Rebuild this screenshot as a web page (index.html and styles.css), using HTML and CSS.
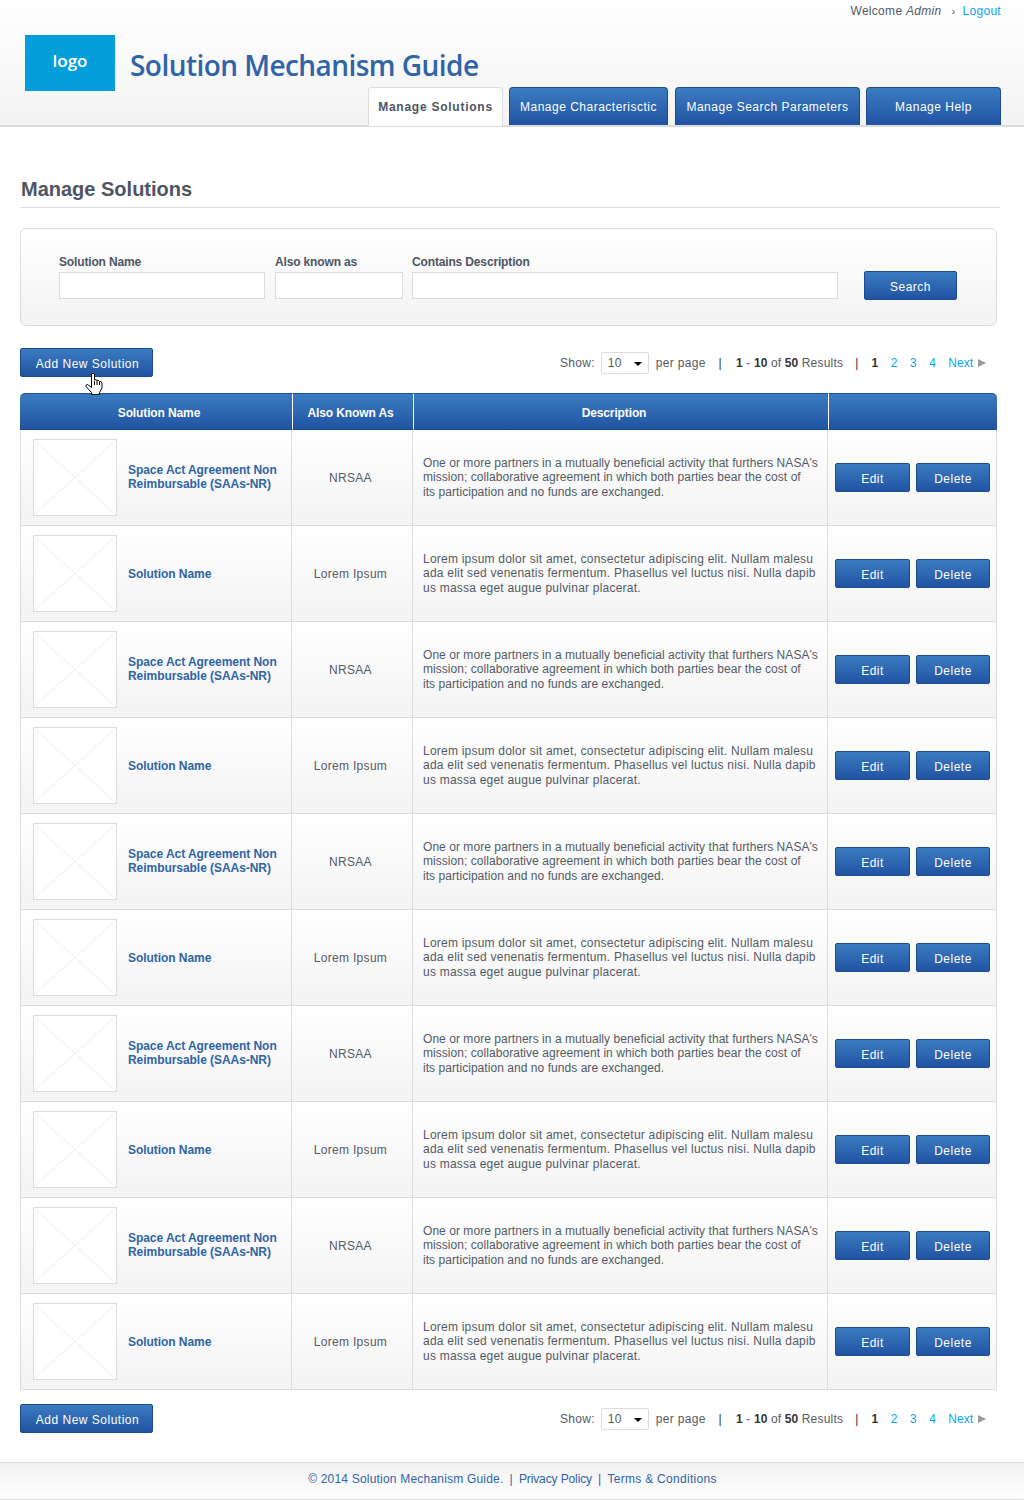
FILE: index.html
```html
<!DOCTYPE html>
<html lang="en">
<head>
    <meta charset="UTF-8">
    <title>Solution Mechanism Guide</title>
    <link rel="stylesheet" href="styles.css">
</head>
<body>
    <header class="header">
        <div class="user-bar">
            <span>Welcome <em>Admin</em></span>
            <span class="user-sep">&rsaquo;</span>
            <a href="#">Logout</a>
        </div>
        <div class="brand">
            <div class="logo">logo</div>
            <div class="site-title">Solution Mechanism Guide</div>
        </div>
        <nav class="tabs">
            <a class="tab tab-active" href="#">Manage Solutions</a>
            <a class="tab tab-chars" href="#">Manage Characterisctic</a>
            <a class="tab tab-params" href="#">Manage Search Parameters</a>
            <a class="tab tab-help" href="#">Manage Help</a>
        </nav>
    </header>

    <main class="content">
        <h1>Manage Solutions</h1>

        <form class="search-panel">
            <div class="field field-name">
                <label>Solution Name</label>
                <input type="text">
            </div>
            <div class="field field-aka">
                <label>Also known as</label>
                <input type="text">
            </div>
            <div class="field field-desc">
                <label>Contains Description</label>
                <input type="text">
            </div>
            <button type="button" class="btn btn-search">Search</button>
        </form>

        <div class="toolbar toolbar-top">
            <button type="button" class="btn btn-add">Add New Solution</button>
            <svg class="hand" width="18" height="23" viewBox="0 0 18 23">
                <path d="M6.5 2 Q8 .5 9.5 2 V8 Q11 7 12 8.5 Q13.5 7.5 14.5 9.5 Q16.5 9 17 11 V16 L14.5 20.5 V22.5 H6.5 V20.5 L1 14.5 Q.5 12.5 2.5 12.5 L6.5 15.5 Z" fill="#fff" stroke="#000" stroke-width="1"/>
                <path d="M9.5 9 V13 M12 9 V13 M14.5 10 V13" stroke="#000" stroke-width="1" fill="none"/>
            </svg>
            <div class="pager">
                <span>Show:</span>
                <span class="select-box">10<i class="select-arrow"></i></span>
                <span>per page</span>
                <span class="pipe">|</span>
                <span class="results"><b>1</b> - <b>10</b> of <b>50</b> Results</span>
                <span class="pipe pipe-last">|</span>
                <span class="pages"><b>1</b><a href="#">2</a><a href="#">3</a><a href="#">4</a><a href="#">Next</a><i class="next-arrow"></i></span>
            </div>
        </div>

        <table class="solutions">
            <colgroup>
                <col class="col-name"><col class="col-aka"><col class="col-desc"><col class="col-actions">
            </colgroup>
            <thead>
                <tr><th>Solution Name</th><th>Also Known As</th><th>Description</th><th></th></tr>
            </thead>
            <tbody>
                <tr>
                    <td><div class="name-cell"><svg class="thumb" viewBox="0 0 84 77" preserveAspectRatio="none"><path d="M0 0 L84 77 M84 0 L0 77"/></svg><a class="name-long" href="#">Space Act Agreement Non Reimbursable (SAAs-NR)</a></div></td>
                    <td class="aka">NRSAA</td>
                    <td class="desc desc-long">One or more partners in a mutually beneficial activity that furthers NASA's<br>mission; collaborative agreement in which both parties bear the cost of<br>its participation and no funds are exchanged.</td>
                    <td><div class="actions"><button type="button" class="btn btn-edit">Edit</button><button type="button" class="btn btn-delete">Delete</button></div></td>
                </tr>
                <tr>
                    <td><div class="name-cell"><svg class="thumb" viewBox="0 0 84 77" preserveAspectRatio="none"><path d="M0 0 L84 77 M84 0 L0 77"/></svg><a href="#">Solution Name</a></div></td>
                    <td class="aka">Lorem Ipsum</td>
                    <td class="desc">Lorem ipsum dolor sit amet, consectetur adipiscing elit. Nullam malesu ada elit sed venenatis fermentum. Phasellus vel luctus nisi. Nulla dapib us massa eget augue pulvinar placerat.</td>
                    <td><div class="actions"><button type="button" class="btn btn-edit">Edit</button><button type="button" class="btn btn-delete">Delete</button></div></td>
                </tr>
                <tr>
                    <td><div class="name-cell"><svg class="thumb" viewBox="0 0 84 77" preserveAspectRatio="none"><path d="M0 0 L84 77 M84 0 L0 77"/></svg><a class="name-long" href="#">Space Act Agreement Non Reimbursable (SAAs-NR)</a></div></td>
                    <td class="aka">NRSAA</td>
                    <td class="desc desc-long">One or more partners in a mutually beneficial activity that furthers NASA's<br>mission; collaborative agreement in which both parties bear the cost of<br>its participation and no funds are exchanged.</td>
                    <td><div class="actions"><button type="button" class="btn btn-edit">Edit</button><button type="button" class="btn btn-delete">Delete</button></div></td>
                </tr>
                <tr>
                    <td><div class="name-cell"><svg class="thumb" viewBox="0 0 84 77" preserveAspectRatio="none"><path d="M0 0 L84 77 M84 0 L0 77"/></svg><a href="#">Solution Name</a></div></td>
                    <td class="aka">Lorem Ipsum</td>
                    <td class="desc">Lorem ipsum dolor sit amet, consectetur adipiscing elit. Nullam malesu ada elit sed venenatis fermentum. Phasellus vel luctus nisi. Nulla dapib us massa eget augue pulvinar placerat.</td>
                    <td><div class="actions"><button type="button" class="btn btn-edit">Edit</button><button type="button" class="btn btn-delete">Delete</button></div></td>
                </tr>
                <tr>
                    <td><div class="name-cell"><svg class="thumb" viewBox="0 0 84 77" preserveAspectRatio="none"><path d="M0 0 L84 77 M84 0 L0 77"/></svg><a class="name-long" href="#">Space Act Agreement Non Reimbursable (SAAs-NR)</a></div></td>
                    <td class="aka">NRSAA</td>
                    <td class="desc desc-long">One or more partners in a mutually beneficial activity that furthers NASA's<br>mission; collaborative agreement in which both parties bear the cost of<br>its participation and no funds are exchanged.</td>
                    <td><div class="actions"><button type="button" class="btn btn-edit">Edit</button><button type="button" class="btn btn-delete">Delete</button></div></td>
                </tr>
                <tr>
                    <td><div class="name-cell"><svg class="thumb" viewBox="0 0 84 77" preserveAspectRatio="none"><path d="M0 0 L84 77 M84 0 L0 77"/></svg><a href="#">Solution Name</a></div></td>
                    <td class="aka">Lorem Ipsum</td>
                    <td class="desc">Lorem ipsum dolor sit amet, consectetur adipiscing elit. Nullam malesu ada elit sed venenatis fermentum. Phasellus vel luctus nisi. Nulla dapib us massa eget augue pulvinar placerat.</td>
                    <td><div class="actions"><button type="button" class="btn btn-edit">Edit</button><button type="button" class="btn btn-delete">Delete</button></div></td>
                </tr>
                <tr>
                    <td><div class="name-cell"><svg class="thumb" viewBox="0 0 84 77" preserveAspectRatio="none"><path d="M0 0 L84 77 M84 0 L0 77"/></svg><a class="name-long" href="#">Space Act Agreement Non Reimbursable (SAAs-NR)</a></div></td>
                    <td class="aka">NRSAA</td>
                    <td class="desc desc-long">One or more partners in a mutually beneficial activity that furthers NASA's<br>mission; collaborative agreement in which both parties bear the cost of<br>its participation and no funds are exchanged.</td>
                    <td><div class="actions"><button type="button" class="btn btn-edit">Edit</button><button type="button" class="btn btn-delete">Delete</button></div></td>
                </tr>
                <tr>
                    <td><div class="name-cell"><svg class="thumb" viewBox="0 0 84 77" preserveAspectRatio="none"><path d="M0 0 L84 77 M84 0 L0 77"/></svg><a href="#">Solution Name</a></div></td>
                    <td class="aka">Lorem Ipsum</td>
                    <td class="desc">Lorem ipsum dolor sit amet, consectetur adipiscing elit. Nullam malesu ada elit sed venenatis fermentum. Phasellus vel luctus nisi. Nulla dapib us massa eget augue pulvinar placerat.</td>
                    <td><div class="actions"><button type="button" class="btn btn-edit">Edit</button><button type="button" class="btn btn-delete">Delete</button></div></td>
                </tr>
                <tr>
                    <td><div class="name-cell"><svg class="thumb" viewBox="0 0 84 77" preserveAspectRatio="none"><path d="M0 0 L84 77 M84 0 L0 77"/></svg><a class="name-long" href="#">Space Act Agreement Non Reimbursable (SAAs-NR)</a></div></td>
                    <td class="aka">NRSAA</td>
                    <td class="desc desc-long">One or more partners in a mutually beneficial activity that furthers NASA's<br>mission; collaborative agreement in which both parties bear the cost of<br>its participation and no funds are exchanged.</td>
                    <td><div class="actions"><button type="button" class="btn btn-edit">Edit</button><button type="button" class="btn btn-delete">Delete</button></div></td>
                </tr>
                <tr>
                    <td><div class="name-cell"><svg class="thumb" viewBox="0 0 84 77" preserveAspectRatio="none"><path d="M0 0 L84 77 M84 0 L0 77"/></svg><a href="#">Solution Name</a></div></td>
                    <td class="aka">Lorem Ipsum</td>
                    <td class="desc">Lorem ipsum dolor sit amet, consectetur adipiscing elit. Nullam malesu ada elit sed venenatis fermentum. Phasellus vel luctus nisi. Nulla dapib us massa eget augue pulvinar placerat.</td>
                    <td><div class="actions"><button type="button" class="btn btn-edit">Edit</button><button type="button" class="btn btn-delete">Delete</button></div></td>
                </tr>
            </tbody>
        </table>

        <div class="toolbar toolbar-bottom">
            <button type="button" class="btn btn-add">Add New Solution</button>
            <div class="pager">
                <span>Show:</span>
                <span class="select-box">10<i class="select-arrow"></i></span>
                <span>per page</span>
                <span class="pipe">|</span>
                <span class="results"><b>1</b> - <b>10</b> of <b>50</b> Results</span>
                <span class="pipe pipe-last">|</span>
                <span class="pages"><b>1</b><a href="#">2</a><a href="#">3</a><a href="#">4</a><a href="#">Next</a><i class="next-arrow"></i></span>
            </div>
        </div>
    </main>

    <footer class="footer">
        <span class="foot-copy">&copy; 2014 Solution Mechanism Guide.</span>
        <span class="foot-sep">|</span>
        <a class="foot-privacy" href="#">Privacy Policy</a>
        <span class="foot-sep">|</span>
        <a href="#">Terms &amp; Conditions</a>
    </footer>
</body>
</html>
```

FILE: styles.css
```css
* {
    box-sizing: border-box;
}

body {
    margin: 0;
    background: #fff;
    font-family: "Liberation Sans", Arial, sans-serif;
    font-size: 12px;
    letter-spacing: 0.3px;
    color: #555a64;
}

a {
    color: #0ba5ec;
    text-decoration: none;
}

/* header */
.header {
    height: 127px;
    padding: 3px 23px 0 25px;
    background: linear-gradient(#fff, #f3f3f3);
    border-bottom: 2px solid #dcdcdc;
}

.user-bar {
    display: flex;
    justify-content: flex-end;
    align-items: center;
    height: 15px;
    color: #555a64;
}

.user-sep {
    margin: 0 7px 0 10px;
    font-size: 11px;
}

.brand {
    display: flex;
    align-items: flex-end;
    margin-top: 17px;
}

.logo {
    display: flex;
    align-items: center;
    justify-content: center;
    width: 90px;
    height: 56px;
    padding-bottom: 5px;
    background: #049fdb;
    color: #fff;
    font-family: "Open Sans", sans-serif;
    font-size: 17px;
    font-weight: 600;
    letter-spacing: 0;
}

.site-title {
    margin: 0 0 6px 15px;
    color: #2f64a8;
    font-family: "Open Sans", sans-serif;
    font-size: 28px;
    font-weight: 600;
    letter-spacing: -0.55px;
    line-height: 40px;
}

.tabs {
    display: flex;
    justify-content: flex-end;
    margin-top: -4px;
}

.tab {
    display: block;
    height: 38px;
    margin-left: 6px;
    padding-top: 12px;
    text-align: center;
    color: #fff;
    letter-spacing: 0.5px;
    background: linear-gradient(#3b7cc0, #2153a3);
    border: 1px solid #1c4a94;
    border-bottom: 0;
    border-radius: 4px 4px 0 0;
}

.tab-active {
    width: 135px;
    height: 39px;
    margin-left: 0;
    background: #fff;
    border-color: #dcdcdc;
    color: #4e5562;
    font-weight: bold;
    letter-spacing: 0.75px;
}

.tab-chars {
    width: 159px;
}

.tab-params {
    width: 185px;
    margin-left: 7px;
}

.tab-help {
    width: 135px;
}

/* page */
.content {
    padding: 0 24px 0 20px;
}

h1 {
    width: 980px;
    margin: 50px 0 20px;
    padding: 0 0 5px 1px;
    border-bottom: 1px solid #dcdcdc;
    color: #4e5562;
    font-size: 20px;
    line-height: 25px;
    letter-spacing: 0;
}

.search-panel {
    display: flex;
    align-items: flex-end;
    width: 977px;
    height: 98px;
    padding: 0 39px 26px 38px;
    background: linear-gradient(#fff, #f3f3f3);
    border: 1px solid #dcdcdc;
    border-radius: 6px;
}

.field label {
    display: block;
    margin-bottom: 3px;
    line-height: 14px;
    font-weight: bold;
    letter-spacing: -0.15px;
    color: #4e5562;
}

.field input {
    display: block;
    width: 100%;
    height: 27px;
    border: 1px solid #dcdcdc;
    background: #fff;
}

.field-name {
    width: 206px;
}

.field-aka {
    width: 128px;
    margin-left: 10px;
}

.field-desc {
    width: 426px;
    margin-left: 9px;
}

.btn {
    height: 29px;
    padding: 2px 0 0;
    background: linear-gradient(#3b7cc0, #2153a3);
    border: 1px solid #1c4a94;
    border-radius: 2px;
    color: #fff;
    font-family: inherit;
    font-size: 12px;
    letter-spacing: 0.5px;
}

.btn-search {
    width: 93px;
    margin: 0 0 0 26px;
    transform: translateY(1px);
}

.btn-add {
    width: 133px;
    padding-left: 2px;
}

.toolbar {
    display: flex;
    justify-content: space-between;
    align-items: center;
    position: relative;
}

.toolbar-top {
    margin-top: 22px;
}

.toolbar-bottom {
    margin-top: 14px;
}

.hand {
    position: absolute;
    left: 65px;
    top: 24px;
}

.pager {
    display: flex;
    align-items: center;
    margin-right: 14px;
    color: #555a64;
}

.select-box {
    position: relative;
    display: block;
    width: 48px;
    height: 22px;
    margin: 0 7px 0 6px;
    padding: 3px 0 0 6px;
    background: #fff;
    border: 1px solid #dcdcdc;
    border-radius: 2px;
}

.select-arrow {
    position: absolute;
    right: 6px;
    top: 9px;
    border-top: 4px solid #000;
    border-left: 4px solid transparent;
    border-right: 4px solid transparent;
}

.pipe {
    margin: 0 14px 0 13px;
    color: #333;
}

.pipe-last {
    margin: 0 13px 0 12px;
}

.results {
    letter-spacing: 0.2px;
}

.results b,
.pages b {
    color: #333;
    letter-spacing: 0;
}

.pages {
    display: flex;
    align-items: center;
    letter-spacing: 0;
}

.pages a {
    margin-left: 12.5px;
}

.next-arrow {
    margin-left: 5px;
    border-left: 8px solid #999;
    border-top: 4px solid transparent;
    border-bottom: 4px solid transparent;
}

/* table */
.solutions {
    width: 977px;
    margin-top: 16px;
    table-layout: fixed;
    border-collapse: separate;
    border-spacing: 0;
}

.col-name {
    width: 272px;
}

.col-aka {
    width: 121px;
}

.col-desc {
    width: 415px;
}

.col-actions {
    width: 169px;
}

.solutions th {
    height: 37px;
    padding: 2px 0 0;
    background: linear-gradient(#3b7cc0, #2153a3);
    border-top: 1px solid #1c4a94;
    border-bottom: 1px solid #1c4a94;
    border-left: 1px solid #fff;
    color: #fff;
    font-size: 12px;
    letter-spacing: -0.12px;
}

.solutions th:first-child {
    padding-left: 6px;
    border-left: 0;
    border-top-left-radius: 5px;
}

.solutions th:nth-child(2) {
    padding-right: 5px;
}

.solutions th:nth-child(3) {
    padding-right: 14px;
}

.solutions th:last-child {
    border-top-right-radius: 5px;
}

.solutions td {
    height: 96px;
    padding: 0;
    background: linear-gradient(#fff, #f3f3f3);
    border-right: 1px solid #dcdcdc;
    border-bottom: 1px solid #dcdcdc;
}

.solutions td:first-child {
    border-left: 1px solid #dcdcdc;
}

.name-cell {
    display: flex;
    align-items: center;
    padding-left: 12px;
}

.name-cell a {
    width: 155px;
    margin-left: 11px;
    color: #2f64a8;
    font-weight: bold;
    line-height: 14px;
    letter-spacing: -0.05px;
}

.name-cell .name-long {
    margin-bottom: 2px;
}

.thumb {
    width: 84px;
    height: 77px;
    flex: none;
    background: #fff;
    border: 1px solid #dcdcdc;
    overflow: visible;
}

.thumb path {
    stroke: #ececec;
    stroke-width: 1;
    fill: none;
}

.solutions .aka {
    padding-right: 3px;
    text-align: center;
}

.solutions .desc {
    padding: 0 4px 0 10px;
    line-height: 14.5px;
    letter-spacing: 0.22px;
}

.solutions .desc-long {
    letter-spacing: 0.05px;
}

.actions {
    display: flex;
    gap: 6px;
    padding-left: 7px;
}

.btn-edit {
    width: 75px;
}

.btn-delete {
    width: 74px;
}

/* footer */
.footer {
    display: flex;
    justify-content: center;
    align-items: center;
    height: 38px;
    margin-top: 29px;
    padding: 0 0 4px 1px;
    background: linear-gradient(#f1f1f1, #fff);
    border-top: 1px solid #dcdcdc;
    border-bottom: 1px solid #dcdcdc;
    color: #2f64a8;
}

.footer a {
    color: #2f64a8;
}

.foot-copy {
    letter-spacing: 0.2px;
}

.foot-privacy {
    letter-spacing: -0.12px;
}

.foot-sep {
    margin: 0 6px;
}
```
